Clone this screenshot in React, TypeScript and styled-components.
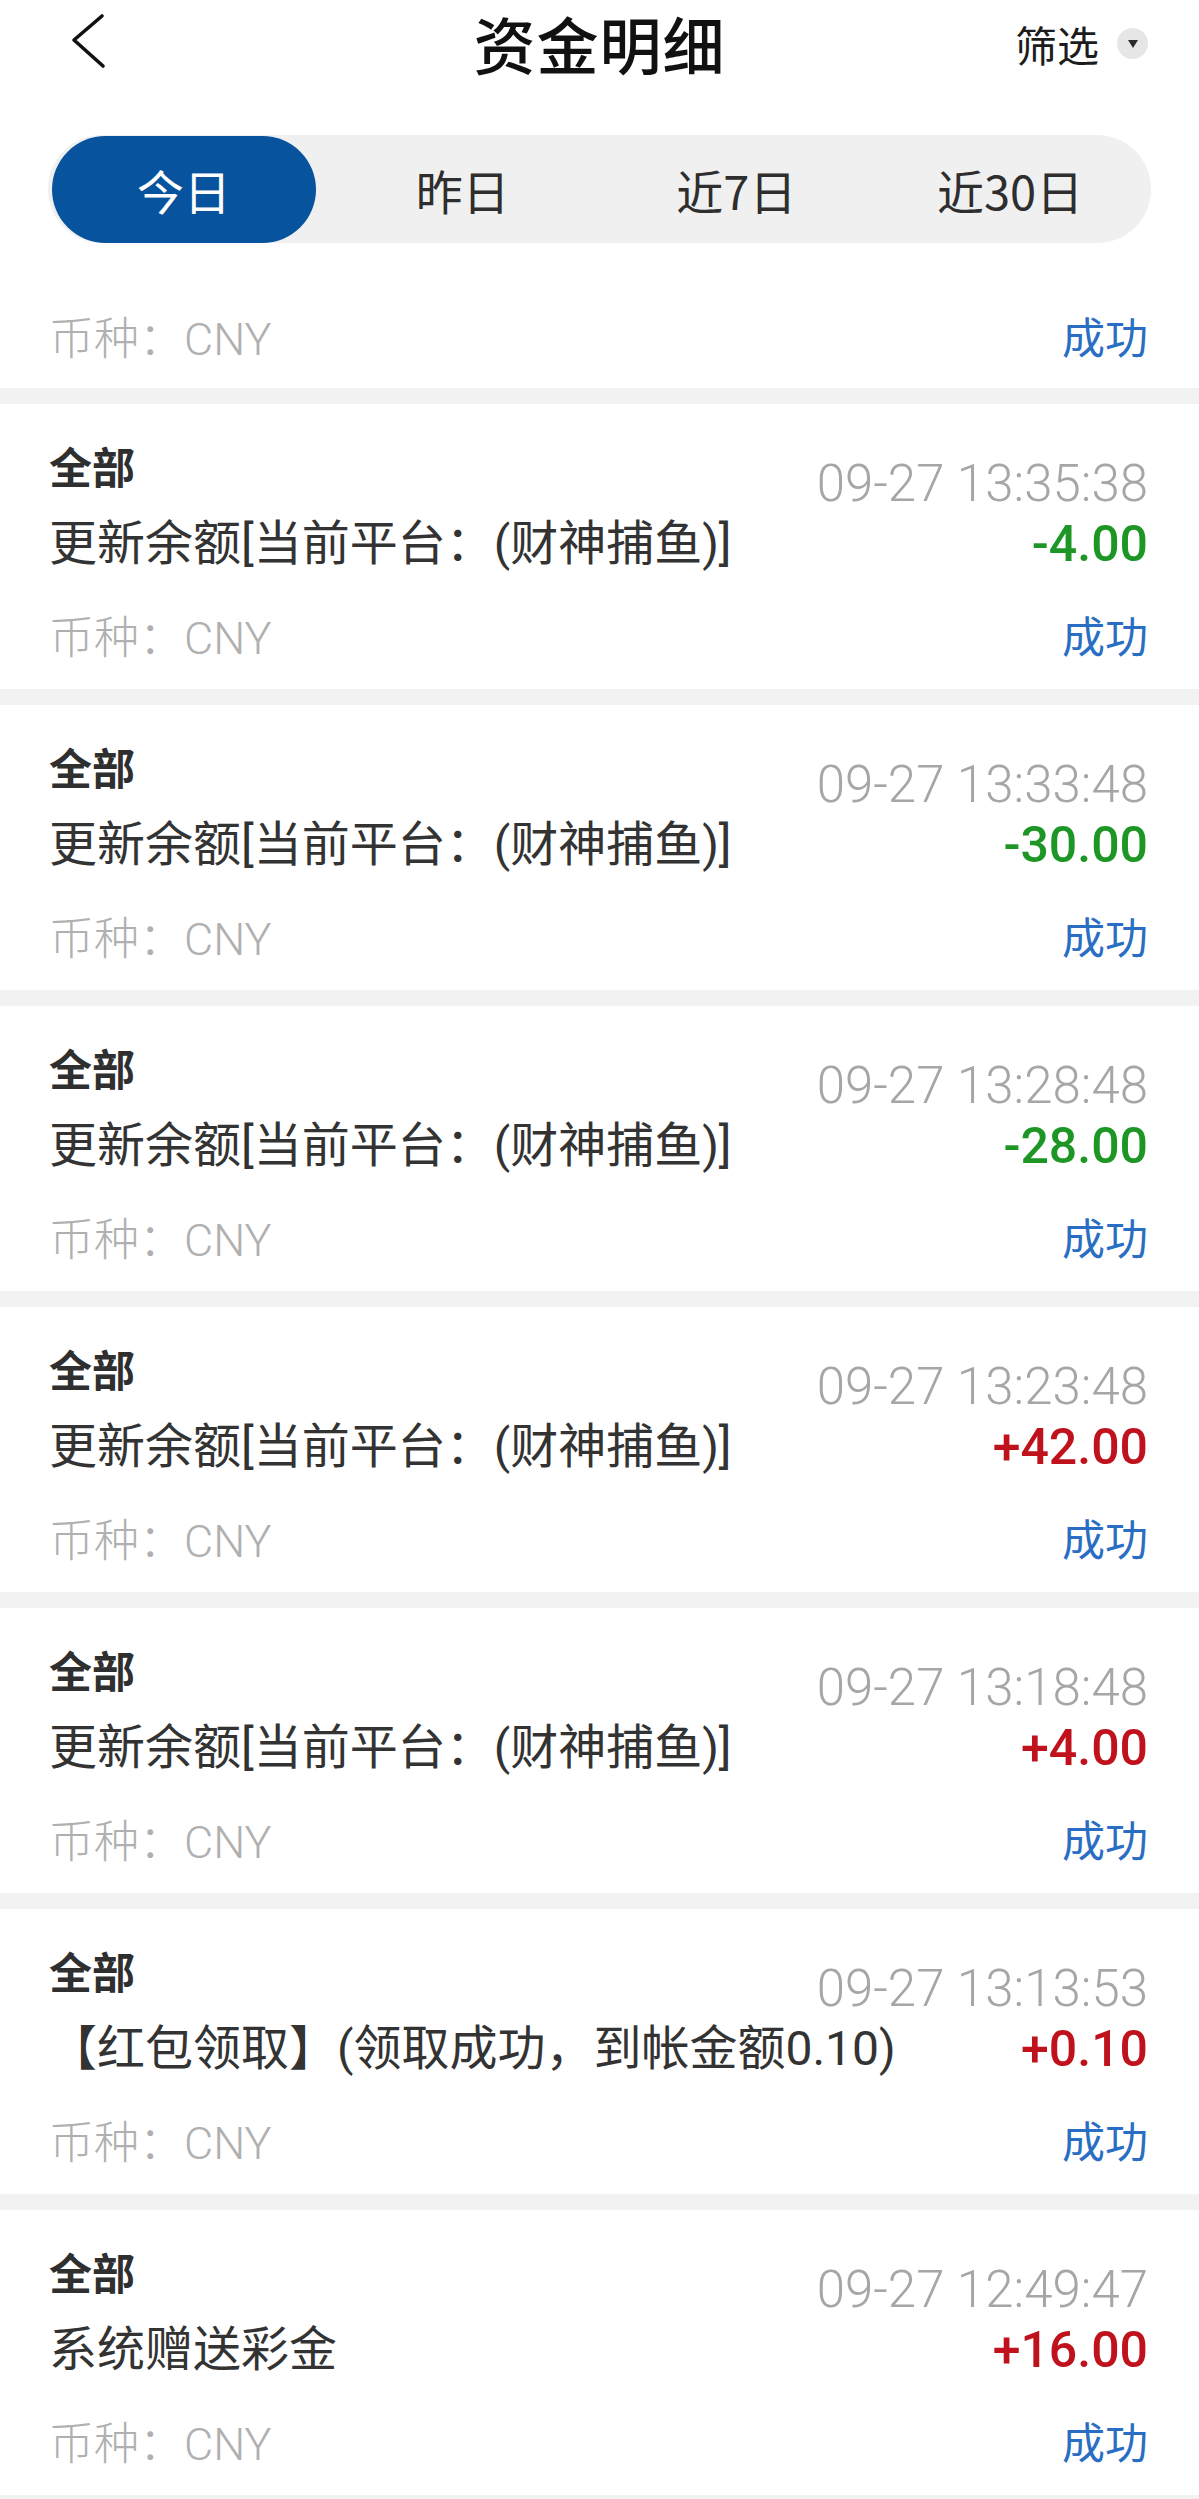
import React, { useState } from 'react';
import styled, { createGlobalStyle } from 'styled-components';

const GlobalStyle = createGlobalStyle`
  html, body {
    margin: 0;
    padding: 0;
    background: #f2f2f2;
  }
  body {
    font-family: Roboto, "Noto Sans CJK SC", sans-serif;
    -webkit-font-smoothing: antialiased;
  }
`;

interface IRecord {
  time: string;
  desc: string;
  amount: string;
}

const records: IRecord[] = [
  { time: '09-27 13:35:38', desc: '更新余额[当前平台：(财神捕鱼)]', amount: '-4.00' },
  { time: '09-27 13:33:48', desc: '更新余额[当前平台：(财神捕鱼)]', amount: '-30.00' },
  { time: '09-27 13:28:48', desc: '更新余额[当前平台：(财神捕鱼)]', amount: '-28.00' },
  { time: '09-27 13:23:48', desc: '更新余额[当前平台：(财神捕鱼)]', amount: '+42.00' },
  { time: '09-27 13:18:48', desc: '更新余额[当前平台：(财神捕鱼)]', amount: '+4.00' },
  { time: '09-27 13:13:53', desc: '【红包领取】(领取成功，到帐金额0.10)', amount: '+0.10' },
  { time: '09-27 12:49:47', desc: '系统赠送彩金', amount: '+16.00' },
];

const tabs = ['今日', '昨日', '近7日', '近30日'];

const App = () => {
  const [active, setActive] = useState(0);

  return (
    <Page>
      <GlobalStyle />
      <Top>
        <NavBar>
          <BackButton aria-label="back">
            <svg width="40" height="60" viewBox="0 0 40 60" fill="none">
              <polyline
                points="36,5 8,29 37,55"
                stroke="#111"
                strokeWidth="3.6"
                strokeLinecap="round"
                strokeLinejoin="round"
              />
            </svg>
          </BackButton>
          <Title>资金明细</Title>
          <Filter>
            筛选
            <FilterDot>
              <svg width="12" height="10" viewBox="0 0 12 10">
                <path d="M1 1 H11 L6 9 Z" fill="#2b2b2b" />
              </svg>
            </FilterDot>
          </Filter>
        </NavBar>

        <TabBar>
          {tabs.map((t, i) => (
            <Tab key={t} $active={i === active} onClick={() => setActive(i)}>
              {t}
            </Tab>
          ))}
        </TabBar>

        <PartialCard>
          <FootRow>
            <Currency>币种：CNY</Currency>
            <Status>成功</Status>
          </FootRow>
        </PartialCard>
      </Top>

      <List>
        {records.map((r) => (
          <Card key={r.time}>
            <TopRow>
              <Kind>全部</Kind>
              <Time>{r.time}</Time>
            </TopRow>
            <MainRow>
              <Desc>{r.desc}</Desc>
              <Amount $positive={r.amount.startsWith('+')}>{r.amount}</Amount>
            </MainRow>
            <FootRow>
              <Currency>币种：CNY</Currency>
              <Status>成功</Status>
            </FootRow>
          </Card>
        ))}
      </List>
    </Page>
  );
};

export default App;

const Page = styled.div`
  width: 1199px;
  min-height: 2499px;
  background: #f2f2f2;
  overflow: hidden;
`;

const Top = styled.div`
  background: #ffffff;
  margin-bottom: 16px;
`;

const NavBar = styled.div`
  display: grid;
  grid-template-columns: 1fr auto 1fr;
  align-items: center;
  height: 86px;
  padding: 0 51px;
`;

const BackButton = styled.div`
  display: flex;
  align-items: center;
  justify-self: start;
  height: 60px;
  margin-left: 15px;
  margin-top: -4px;
`;

const Title = styled.div`
  font-family: "Noto Sans CJK SC", sans-serif;
  font-size: 62px;
  font-weight: 500;
  color: #111111;
  line-height: 80px;
  letter-spacing: 1px;
`;

const Filter = styled.div`
  justify-self: end;
  display: flex;
  align-items: center;
  font-family: "Noto Sans CJK SC", sans-serif;
  font-size: 42px;
  color: #1c1c1c;
`;

const FilterDot = styled.span`
  display: flex;
  align-items: center;
  justify-content: center;
  width: 31px;
  height: 31px;
  border-radius: 50%;
  background: #e6e6e6;
  margin-left: 18px;

  svg {
    margin-top: 2px;
  }
`;

const TabBar = styled.div`
  display: grid;
  grid-template-columns: repeat(4, 1fr);
  margin: 49px 48px 0;
  height: 108px;
  padding: 0 4px;
  border-radius: 54px;
  background: #f0f0f0;
`;

const Tab = styled.div<{ $active: boolean }>`
  display: flex;
  align-items: center;
  justify-content: center;
  height: 107px;
  margin-top: 1px;
  margin-right: ${(p) => (p.$active ? '10px' : '0')};
  border-radius: 54px;
  font-family: "Noto Sans CJK SC", Roboto, sans-serif;
  font-size: 47px;
  color: ${(p) => (p.$active ? '#ffffff' : '#2e2e2e')};
  background: ${(p) => (p.$active ? '#08539d' : 'transparent')};
  cursor: pointer;
`;

const PartialCard = styled.div`
  padding: 65px 51px 26px 49px;
`;

const List = styled.div`
  display: flex;
  flex-direction: column;
  gap: 16px;
`;

const Card = styled.div`
  display: flex;
  flex-direction: column;
  background: #ffffff;
  padding: 31px 51px 28px 49px;
`;

const TopRow = styled.div`
  display: flex;
  justify-content: space-between;
  height: 74px;
`;

const Kind = styled.div`
  font-family: "Noto Sans CJK SC", sans-serif;
  font-size: 43px;
  font-weight: 700;
  color: #2f2f2f;
  line-height: 60px;
`;

const Time = styled.div`
  align-self: flex-end;
  font-family: Roboto, sans-serif;
  font-size: 51px;
  font-weight: 300;
  color: #a6a6a6;
  line-height: 50px;
`;

const MainRow = styled.div`
  display: flex;
  justify-content: space-between;
  align-items: center;
  height: 70px;
`;

const Desc = styled.div`
  font-family: Roboto, "Noto Sans CJK SC", sans-serif;
  font-size: 48px;
  color: #333333;
  line-height: 70px;
  white-space: nowrap;
`;

const Amount = styled.div<{ $positive: boolean }>`
  font-family: Roboto, sans-serif;
  font-size: 50px;
  font-weight: 500;
  line-height: 70px;
  color: ${(p) => (p.$positive ? '#c0121c' : '#1d9626')};
`;

const FootRow = styled.div`
  display: flex;
  justify-content: space-between;
  align-items: center;
  height: 54px;
  margin-top: 28px;

  ${PartialCard} & {
    margin-top: 0;
  }
`;

const Currency = styled.div`
  font-family: Roboto, "Noto Sans CJK SC", sans-serif;
  font-size: 45px;
  font-weight: 300;
  color: #b0b0b0;
`;

const Status = styled.div`
  font-family: "Noto Sans CJK SC", sans-serif;
  font-size: 43px;
  color: #2a6ec4;
`;
